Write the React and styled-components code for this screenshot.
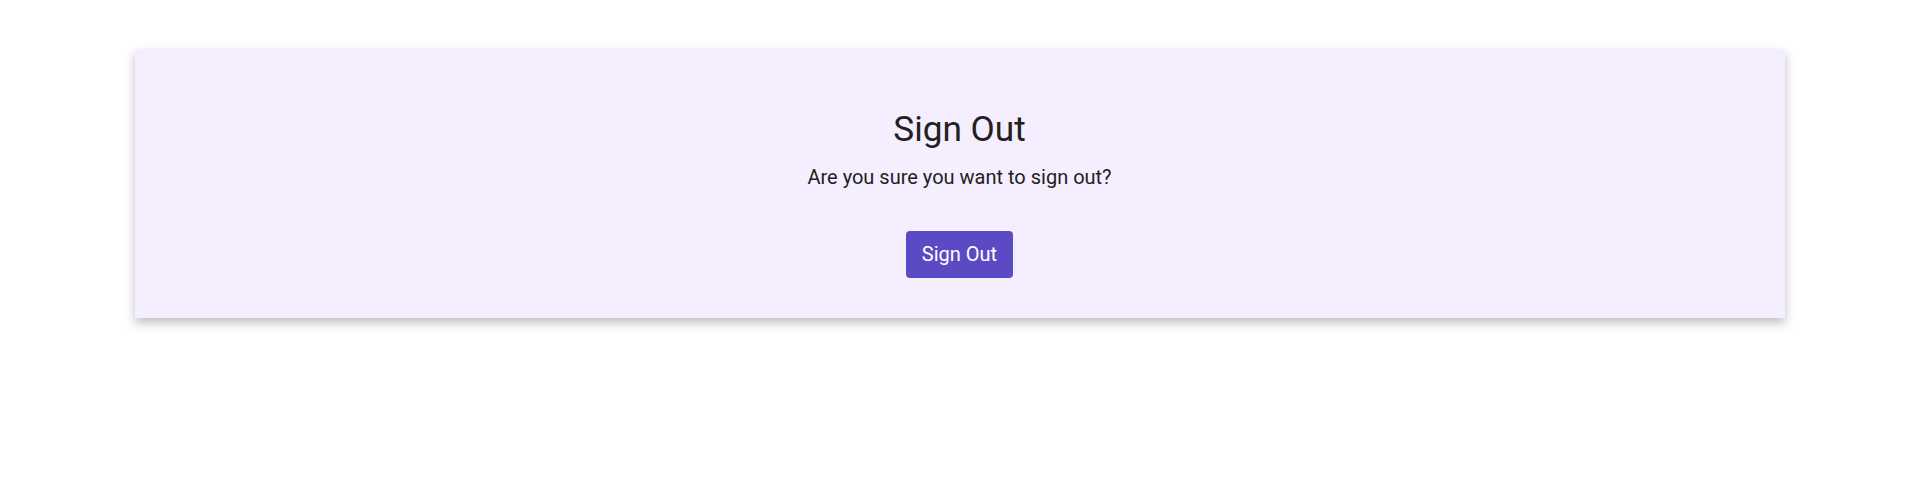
import React from "react"
import styled, { createGlobalStyle } from "styled-components"

const GlobalStyle = createGlobalStyle`
  body {
    margin: 0;
    background: #fff;
    font-family: Roboto, "Liberation Sans", sans-serif;
  }
`

const Page = styled.div`
  padding: 49px 0 40px;
  display: flex;
  justify-content: center;
`

const Card = styled.div`
  width: 1650px;
  box-sizing: border-box;
  background: #f5eefe;
  padding: 60px 40px 40px;
  display: flex;
  flex-direction: column;
  align-items: center;
  box-shadow: 0 5px 10px rgba(0, 0, 0, 0.25);
`

const Title = styled.h2`
  margin: 0 0 16px;
  font-size: 35.2px;
  line-height: 41px;
  font-weight: 400;
  color: #212121;
`

const Message = styled.p`
  margin: 0 0 42px;
  font-size: 20px;
  line-height: 23px;
  color: #212121;
`

const Button = styled.button`
  font-family: inherit;
  font-size: 20px;
  line-height: 23px;
  color: #fff;
  background: #5c4ac4;
  border: none;
  border-radius: 4px;
  padding: 12px 16px;
  cursor: pointer;

  &:hover {
    background: #4e3db3;
  }
`

const App = () => {
  return (
    <>
      <GlobalStyle />
      <Page>
        <Card>
          <Title>Sign Out</Title>
          <Message>Are you sure you want to sign out?</Message>
          <Button>Sign Out</Button>
        </Card>
      </Page>
    </>
  )
}

export default App
